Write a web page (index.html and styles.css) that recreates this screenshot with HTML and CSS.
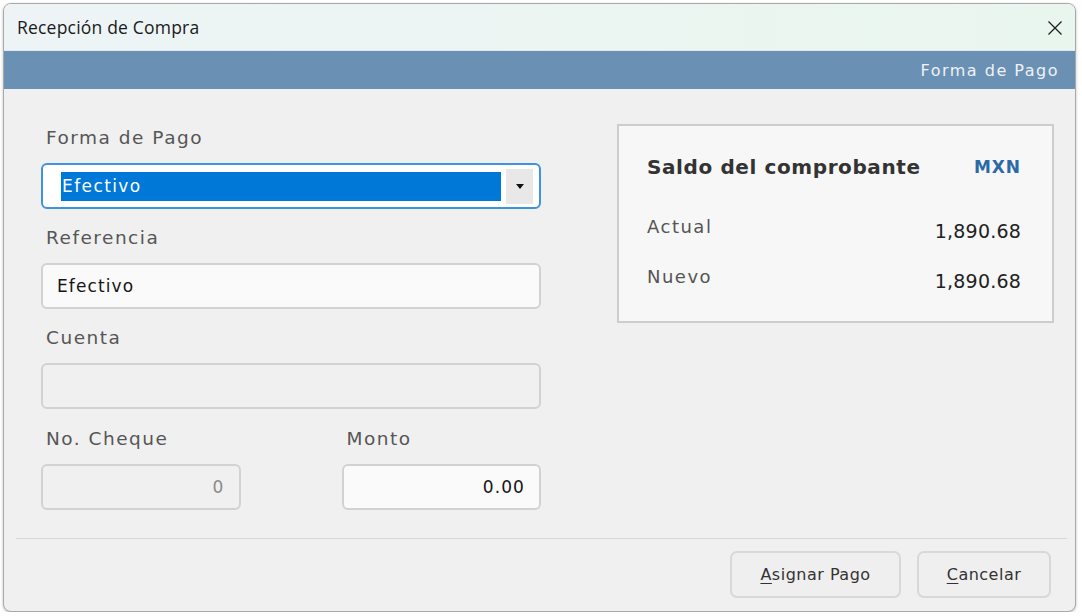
FILE: index.html
```html
<!DOCTYPE html>
<html lang="es">
<head>
<meta charset="utf-8">
<title>Recepción de Compra</title>
<link rel="stylesheet" href="styles.css">
</head>
<body>
<div class="window">
  <div class="titlebar">
    <span class="title">Recepción de Compra</span>
    <span class="close" aria-label="Cerrar">
      <svg width="16" height="16" viewBox="0 0 16 16"><path d="M1.5 1.5 L14.5 14.5 M14.5 1.5 L1.5 14.5" stroke="#1f1f1f" stroke-width="1.3" fill="none"/></svg>
    </span>
  </div>
  <div class="banner">Forma de Pago</div>
  <div class="content">
    <div class="form">
      <div class="field">
        <div class="label">Forma de Pago</div>
        <div class="select">
          <span class="select-value">Efectivo</span>
          <span class="select-btn"><svg width="8" height="5" viewBox="0 0 8 5"><path d="M0 0 H8 L4 5 Z" fill="#111"/></svg></span>
        </div>
      </div>
      <div class="field">
        <div class="label">Referencia</div>
        <div class="input">Efectivo</div>
      </div>
      <div class="field">
        <div class="label">Cuenta</div>
        <div class="input disabled"></div>
      </div>
      <div class="row">
        <div class="field half">
          <div class="label">No. Cheque</div>
          <div class="input disabled num">0</div>
        </div>
        <div class="field half">
          <div class="label">Monto</div>
          <div class="input num">0.00</div>
        </div>
      </div>
    </div>
    <div class="card">
      <div class="card-head">
        <span class="card-title">Saldo del comprobante</span>
        <span class="currency">MXN</span>
      </div>
      <div class="card-row">
        <span class="card-label">Actual</span>
        <span class="card-value">1,890.68</span>
      </div>
      <div class="card-row">
        <span class="card-label">Nuevo</span>
        <span class="card-value">1,890.68</span>
      </div>
    </div>
  </div>
  <div class="footer">
    <button class="btn btn-assign"><u>A</u>signar Pago</button>
    <button class="btn btn-cancel"><u>C</u>ancelar</button>
  </div>
</div>
</body>
</html>
```

FILE: styles.css
```css
html, body {
  margin: 0;
  padding: 0;
  background: #ffffff;
}

body {
  font-family: "DejaVu Sans", "Liberation Sans", sans-serif;
}

.window {
  margin: 3px 0 0 3px;
  width: 1073px;
  height: 609px;
  box-sizing: border-box;
  border: 1px solid #a8a8a8;
  border-radius: 8px;
  overflow: hidden;
  background: #f0f0f0;
  display: flex;
  flex-direction: column;
  box-shadow: 0 1px 3px rgba(0,0,0,0.25);
}

.titlebar {
  height: 46px;
  flex: none;
  display: flex;
  align-items: center;
  justify-content: space-between;
  padding: 0 12px 0 13px;
  background: linear-gradient(90deg, #eef4f6 0%, #e9f6ee 100%);
  border-bottom: 1px solid #dfe8ec;
}

.title {
  font-family: "Open Sans", "Noto Sans", sans-serif;
  font-size: 17.5px;
  letter-spacing: 0.2px;
  color: #1a1a1a;
}

.close {
  display: flex;
  width: 16px;
  height: 16px;
  margin-top: 1px;
}

.banner {
  height: 38px;
  flex: none;
  background: #6a90b4;
  color: #eef2f6;
  font-size: 16px;
  letter-spacing: 1.5px;
  display: flex;
  align-items: center;
  justify-content: flex-end;
  padding-right: 16px;
}

.content {
  flex: 1;
  display: flex;
  align-items: flex-start;
  gap: 76px;
  padding: 36px 0 0 37px;
}

.form {
  width: 500px;
  flex: none;
}

.field {
  margin-bottom: 17px;
}

.label {
  height: 24px;
  line-height: 24px;
  margin-top: 1px;
  margin-bottom: 13px;
  padding-left: 5px;
  font-size: 18.5px;
  letter-spacing: 1.5px;
  color: #565656;
}

.row {
  display: flex;
  gap: 101px;
}

.half {
  width: 200px;
}

.select {
  height: 46px;
  box-sizing: border-box;
  border: 2px solid #3f93de;
  border-radius: 6px;
  background: #ffffff;
  display: flex;
  align-items: center;
  padding: 0 6px 0 18px;
  gap: 5px;
}

.select-value {
  flex: 1;
  height: 29px;
  line-height: 29px;
  background: #0078d7;
  color: #ffffff;
  font-size: 17px;
  letter-spacing: 1.4px;
  padding-left: 1px;
}

.select-btn {
  width: 27px;
  height: 35px;
  background: #e8e8e8;
  display: flex;
  align-items: center;
  justify-content: center;
}

.input {
  height: 46px;
  box-sizing: border-box;
  border: 2px solid #d2d2d2;
  border-radius: 6px;
  background: #fafafa;
  display: flex;
  align-items: center;
  padding: 0 14px;
  font-size: 17px;
  letter-spacing: 1.1px;
  color: #151515;
}

.input.disabled {
  background: #f0f0f0;
  color: #8a8a8a;
}

.input.num {
  justify-content: flex-end;
}

.card {
  width: 437px;
  height: 199px;
  box-sizing: border-box;
  margin-top: -1px;
  border: 2px solid #cdcdcd;
  background: #f7f7f7;
  padding: 26px 31px 0 28px;
}

.card-head {
  display: flex;
  justify-content: space-between;
  align-items: center;
  height: 30px;
  margin-bottom: 30px;
}

.card-title {
  font-size: 20px;
  font-weight: bold;
  letter-spacing: 0.6px;
  color: #333333;
}

.currency {
  font-size: 17px;
  font-weight: bold;
  color: #2b6aa6;
  letter-spacing: 0.9px;
}

.card-row {
  display: flex;
  justify-content: space-between;
  align-items: flex-end;
  height: 30px;
  margin-bottom: 20px;
}

.card-label {
  font-size: 18px;
  letter-spacing: 1.5px;
  color: #555555;
  padding-bottom: 5px;
}

.card-value {
  font-size: 19px;
  letter-spacing: 0.2px;
  color: #222222;
}

.footer {
  flex: none;
  margin: 0 8px 0 12px;
  border-top: 1px solid #d8d8d8;
  display: flex;
  justify-content: flex-end;
  gap: 16px;
  padding: 12px 16px 13px 0;
}

.btn {
  height: 47px;
  box-sizing: border-box;
  border: 2px solid #d8d8d8;
  border-radius: 7px;
  background: #efefef;
  font-family: "DejaVu Sans", "Liberation Sans", sans-serif;
  font-size: 16px;
  letter-spacing: 0.5px;
  color: #333333;
  padding: 0;
}

.btn u {
  text-underline-offset: 3px;
}

.btn-assign {
  width: 171px;
}

.btn-cancel {
  width: 134px;
}
```
